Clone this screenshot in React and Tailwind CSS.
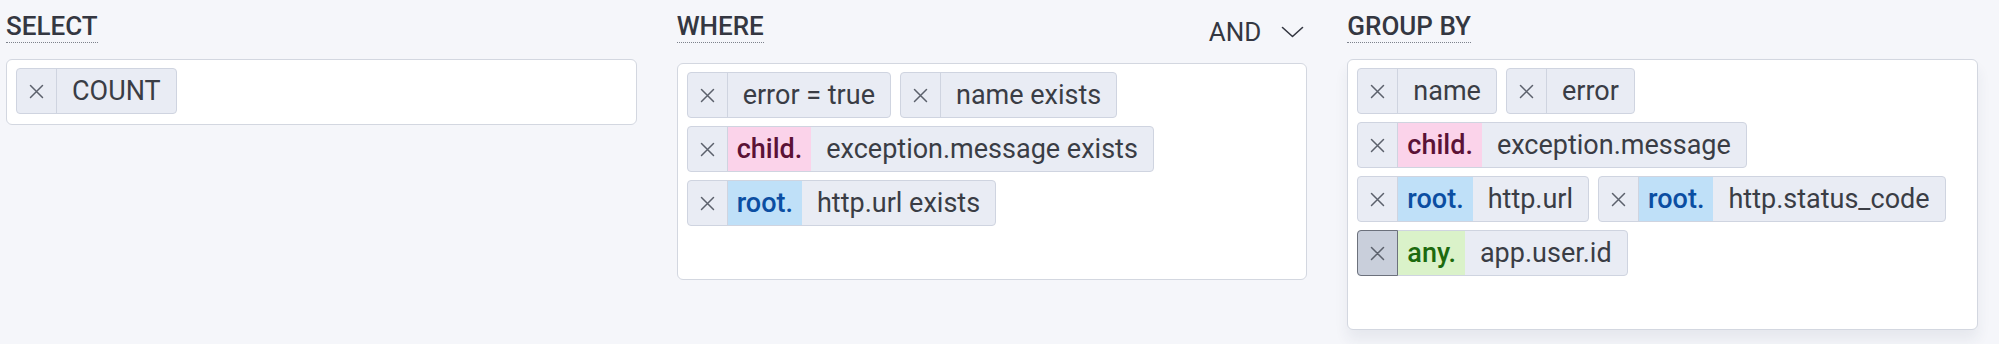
import React from 'react';

const prefixTones = {
  'child.': 'bg-[#fbd3ea] text-[#5b1236]',
  'root.': 'bg-[#bfe0f8] text-[#0b4ea2]',
  'any.': 'bg-[#daf2c9] text-[#1c6a0e]',
};

const XIcon = () => (
  <svg width="15" height="15" viewBox="0 0 15 15" fill="none" stroke="#5c616c" strokeWidth="1.5" strokeLinecap="round">
    <path d="M1.5 1.5 L13.5 13.5 M13.5 1.5 L1.5 13.5" />
  </svg>
);

const Chip = ({ prefix, label, hover }) => (
  <div className="flex h-[46px] items-stretch rounded-[4px] border border-[#cfd4e0] bg-[#e9ecf4]">
    {hover ? (
      <span className="-my-px -ml-px flex w-[41px] items-center justify-center rounded-l-[4px] border border-[#6c717c] bg-[#c9cfdb]">
        <XIcon />
      </span>
    ) : (
      <span className="flex w-[40px] items-center justify-center border-r border-[#cfd4e0]">
        <XIcon />
      </span>
    )}
    {prefix && (
      <span className={'flex items-center px-[9px] font-medium ' + prefixTones[prefix]}>{prefix}</span>
    )}
    <span className="flex items-center px-[15px]">{label}</span>
  </div>
);

const Label = ({ children }) => (
  <span className="block w-fit border-b border-dotted border-[#7d828c] text-[26px] font-medium leading-[31px] text-[#343741]">
    {children}
  </span>
);

const ChipBox = ({ chips, extra = '' }) => (
  <div className={'mt-[16px] flex flex-wrap gap-x-[9px] gap-y-[8px] rounded-[6px] border border-[#d3d7e0] bg-white px-[9px] pt-[8px] pb-[10px] ' + extra}>
    {chips.map((c, i) => (
      <Chip key={i} {...c} />
    ))}
    <input className="h-[35px] min-w-[400px] flex-1 bg-transparent outline-none" />
  </div>
);

export default function App() {
  return (
    <div
      className="min-h-[344px] bg-[#f5f6fa] pt-[11px] pl-[6px] pr-[21px] text-[27px] leading-[31px] text-[#3a3d45]"
      style={{ fontFamily: 'Roboto, "Liberation Sans", sans-serif' }}
    >
      <div className="grid grid-cols-3 items-start gap-[40px]">
        <div>
          <Label>SELECT</Label>
          <ChipBox chips={[{ label: 'COUNT' }]} />
        </div>

        <div>
          <div className="flex items-start justify-between">
            <Label>WHERE</Label>
            <div className="mt-[6px] mr-[3px] flex items-center gap-[20px] text-[26px] leading-[30px] text-[#343741]">
              <span>AND</span>
              <svg width="23" height="12" viewBox="0 0 23 12" fill="none" stroke="#343741" strokeWidth="1.6" strokeLinecap="round" strokeLinejoin="round">
                <path d="M1.5 1.5 L11.5 10.5 L21.5 1.5" />
              </svg>
            </div>
          </div>
          <ChipBox
            chips={[
              { label: 'error = true' },
              { label: 'name exists' },
              { prefix: 'child.', label: 'exception.message exists' },
              { prefix: 'root.', label: 'http.url exists' },
            ]}
          />
        </div>

        <div>
          <Label>GROUP BY</Label>
          <ChipBox
            extra="shadow-[0_10px_14px_rgba(40,50,90,0.07)]"
            chips={[
              { label: 'name' },
              { label: 'error' },
              { prefix: 'child.', label: 'exception.message' },
              { prefix: 'root.', label: 'http.url' },
              { prefix: 'root.', label: 'http.status_code' },
              { prefix: 'any.', label: 'app.user.id', hover: true },
            ]}
          />
        </div>
      </div>
    </div>
  );
}
